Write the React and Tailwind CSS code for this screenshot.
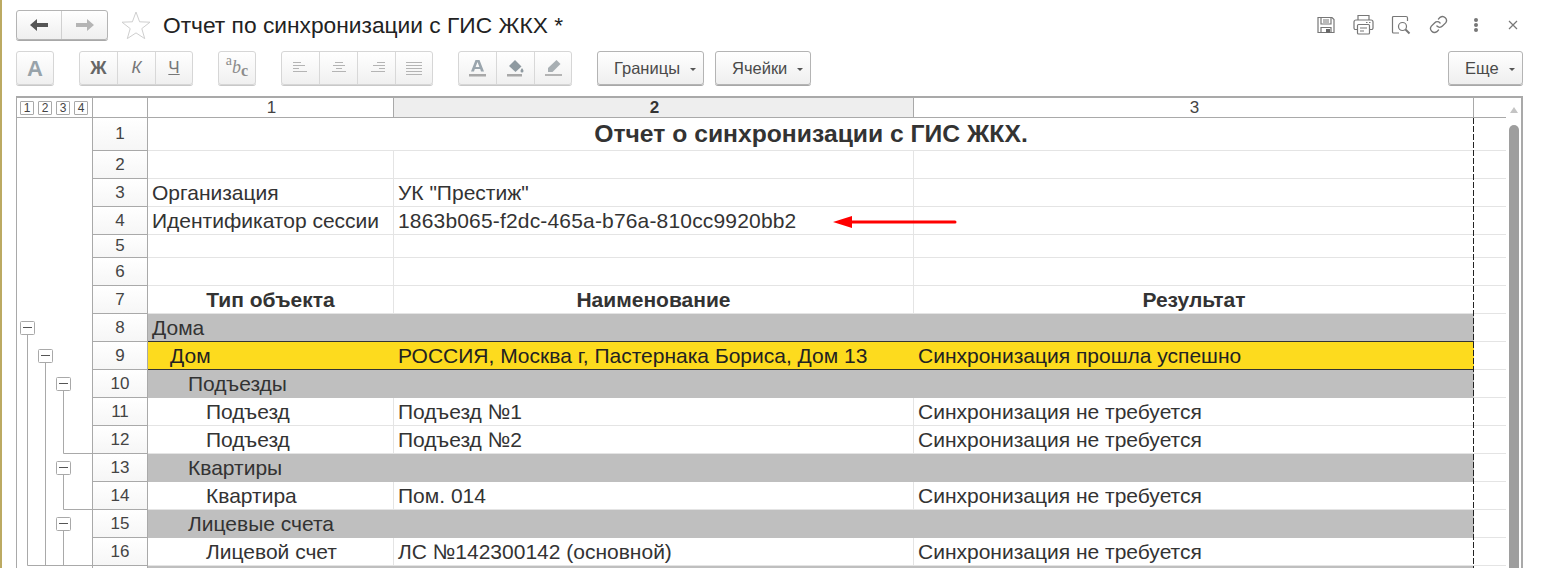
const borderLine = "border-[#a9a9a9]";

const rows = [
  { n: 1, h: "h-[33px]", title: "Отчет о синхронизации с ГИС ЖКХ." },
  { n: 2, h: "h-[28px]", c: ["", "", ""] },
  { n: 3, h: "h-[28px]", c: ["Организация", 'УК "Престиж"', ""] },
  { n: 4, h: "h-[28px]", c: ["Идентификатор сессии", <span className="tracking-[0.17px]">1863b065-f2dc-465a-b76a-810cc9920bb2</span>, ""], arrow: true },
  { n: 5, h: "h-[23px]", c: ["", "", ""] },
  { n: 6, h: "h-[28px]", c: ["", "", ""] },
  { n: 7, h: "h-[28px]", c: ["Тип объекта", "Наименование", "Результат"], head: true },
  { n: 8, h: "h-[28px]", group: "Дома", dark: true },
  { n: 9, h: "h-[28px]", c: ["Дом", "РОССИЯ, Москва г, Пастернака Бориса, Дом 13", "Синхронизация прошла успешно"], indent: "pl-[22px]", yellow: true },
  { n: 10, h: "h-[28px]", group: "Подъезды", indent: "pl-[40px]" },
  { n: 11, h: "h-[28px]", c: ["Подъезд", "Подъезд №1", "Синхронизация не требуется"], indent: "pl-[58px]" },
  { n: 12, h: "h-[28px]", c: ["Подъезд", "Подъезд №2", "Синхронизация не требуется"], indent: "pl-[58px]" },
  { n: 13, h: "h-[28px]", group: "Квартиры", indent: "pl-[40px]" },
  { n: 14, h: "h-[28px]", c: ["Квартира", "Пом. 014", "Синхронизация не требуется"], indent: "pl-[58px]" },
  { n: 15, h: "h-[28px]", group: "Лицевые счета", indent: "pl-[40px]" },
  { n: 16, h: "h-[28px]", c: ["Лицевой счет", "ЛС №142300142 (основной)", "Синхронизация не требуется"], indent: "pl-[58px]" },
  // only the top edge of this row is on screen
  { n: "", h: "h-[28px]", group: "", indent: "pl-[40px]" },
];

function Btn({ children, w = "w-[38px] last:w-[36px]" }) {
  return <div className={`${w} flex items-center justify-center border-r border-[#d8d8d8] last:border-r-0`}>{children}</div>;
}

function Group({ children }) {
  return (
    <div className="flex h-[34px] rounded-[3px] border border-[#d6d6d6] bg-linear-to-b from-white to-[#f0f0f0] shadow-[0_1px_0_#c8c8c8]">
      {children}
    </div>
  );
}

function MenuButton({ label, w }) {
  return (
    <div className={`${w} flex h-[34px] items-center gap-[10px] rounded-[3px] border border-[#b4b4b4] bg-linear-to-b from-white to-[#efefef] pl-[16px] text-[16.5px] text-[#4a4a4a] shadow-[0_1px_0_#a8a8a8]`}>
      <span>{label}</span>
      <span className="mt-[2px] h-0 w-0 border-x-[3px] border-t-[3px] border-x-transparent border-t-[#555]" />
    </div>
  );
}

function AlignIcon({ lines }) {
  return (
    <svg width="16" height="14" viewBox="0 0 16 14" stroke="#b4b4b4" strokeWidth="1">
      {lines.map((l, i) => (
        <line key={i} x1={l[0]} x2={l[1]} y1={1.5 + i * 3} y2={1.5 + i * 3} />
      ))}
    </svg>
  );
}

function TitleIcons() {
  return (
    <div className="ml-auto flex items-center pr-[23px]">
      <svg className="mr-[17px]" width="20" height="20" viewBox="0 0 20 20" fill="none" stroke="#777" strokeWidth="1.2">
        <path d="M2 2.5h14l2 2v13H2z" />
        <path d="M5 2.5v6.5h10V2.5M7 5h6M7 7h6" />
        <path d="M5 17.5v-5h10v5" />
        <rect x="10" y="14" width="4" height="3.5" fill="#666" stroke="none" />
      </svg>
      <svg className="mr-[17px]" width="21" height="21" viewBox="0 0 21 21" fill="none" stroke="#777" strokeWidth="1.2">
        <path d="M5 6V1.5h11V6" />
        <path d="M4.5 15.5H2.5a1.5 1.5 0 0 1-1.5-1.5V8a2 2 0 0 1 2-2h15a2 2 0 0 1 2 2v6a1.5 1.5 0 0 1-1.5 1.5h-2" />
        <rect x="4.5" y="10.5" width="12" height="9.5" rx="1" />
        <path d="M7 14h7M7 17h4M13 8.5h1.5M16 8.5h1.5" />
      </svg>
      <svg className="mr-[18px]" width="20" height="20" viewBox="0 0 20 20" fill="none" stroke="#777" strokeWidth="1.2">
        <path d="M15 1.5H2.5a1 1 0 0 0-1 1V17a1 1 0 0 0 1 1H8M15 1.5a1.5 1.5 0 0 1 1.5 1.5v3" />
        <circle cx="11.5" cy="11.5" r="4" />
        <path d="M14.5 14.5l4 4" strokeWidth="2" />
      </svg>
      <svg className="mr-[26px]" width="19" height="19" viewBox="0 0 24 24" fill="none" stroke="#777" strokeWidth="1.7" strokeLinecap="round">
        <path d="M10 14a5 5 0 0 0 7 0l4-4a5 5 0 0 0-7-7l-2 2" />
        <path d="M14 10a5 5 0 0 0-7 0l-4 4a5 5 0 0 0 7 7l2-2" />
      </svg>
      <div className="mr-[30px] flex flex-col gap-[1px]">
        <span className="h-[4px] w-[4px] rounded-full bg-[#777]" />
        <span className="h-[4px] w-[4px] rounded-full bg-[#777]" />
        <span className="h-[4px] w-[4px] rounded-full bg-[#777]" />
      </div>
      <svg width="10" height="10" viewBox="0 0 10 10" stroke="#777" strokeWidth="1.2">
        <path d="M1 1l8 8M9 1l-8 8" />
      </svg>
    </div>
  );
}

function Toolbar() {
  return (
    <div className="flex h-[34px] pl-[14px] pr-[18px] items-start">
      <Group>
        <Btn w="w-[36px]"><span className="text-[22px] font-bold text-[#98a3aa]">А</span></Btn>
      </Group>
      <div className="ml-[25px]">
        <Group>
          <Btn><span className="text-[18px] font-bold text-[#666]">Ж</span></Btn>
          <Btn><span className="text-[17px] italic text-[#777]">К</span></Btn>
          <Btn><span className="text-[17px] underline text-[#777]">Ч</span></Btn>
        </Group>
      </div>
      <div className="ml-[25px]">
        <Group>
          <Btn w="w-[36px]">
            <span className="flex font-['Liberation_Serif',serif] leading-none text-[#8c8c8c]">
              <span className="-mt-[4px] text-[14px]">a</span>
              <span className="text-[18px] italic">b</span>
              <span className="mt-[5px] text-[16px] font-bold">c</span>
            </span>
          </Btn>
        </Group>
      </div>
      <div className="ml-[25px]">
        <Group>
          <Btn><AlignIcon lines={[[0, 8], [0, 12], [0, 6], [0, 14]]} /></Btn>
          <Btn><AlignIcon lines={[[4, 12], [2, 14], [5, 11], [1, 15]]} /></Btn>
          <Btn><AlignIcon lines={[[8, 16], [4, 16], [10, 16], [2, 16]]} /></Btn>
          <Btn><AlignIcon lines={[[0, 16], [0, 16], [0, 16], [0, 16], [0, 16]]} /></Btn>
        </Group>
      </div>
      <div className="ml-[25px]">
        <Group>
          <Btn>
            <svg width="17" height="18" viewBox="0 0 17 18" fill="#9aa5ad">
              <path d="M6.5 1h4L15 12.5h-3l-.8-2.5H5.8L5 12.5H2zM6.6 8h3.8L8.5 3z" fillRule="evenodd" />
              <rect y="15" width="17" height="2.5" fill="#a8a8a8" />
            </svg>
          </Btn>
          <Btn>
            <svg width="17" height="18" viewBox="0 0 17 18" fill="#8f9aa1">
              <path d="M8 1l6.5 6.5L8.5 13 2 7z" />
              <path d="M15 9c1 1.5 1.5 2.2 1.5 3a1.5 1.5 0 0 1-3 0c0-.8.5-1.5 1.5-3z" />
              <rect y="15" width="15" height="2.5" fill="#a8a8a8" />
            </svg>
          </Btn>
          <Btn>
            <svg width="17" height="18" viewBox="0 0 17 18" fill="#a8afb3">
              <path d="M11.5 1l4 4-8 8H3v-4z" />
              <rect y="15" width="17" height="2" fill="#b4b4b4" />
            </svg>
          </Btn>
        </Group>
      </div>
      <div className="ml-[25px]"><MenuButton label="Границы" w="w-[107px]" /></div>
      <div className="ml-[11px]"><MenuButton label="Ячейки" w="w-[96px]" /></div>
      <div className="ml-auto"><MenuButton label="Еще" w="w-[75px]" /></div>
    </div>
  );
}

// outline tree in the gutter, coordinates are relative to the gutter body
function TreeLines() {
  const top = 118;
  const box = (x, y) => (
    <g key={`${x}-${y}`}>
      <rect x={x + 0.5} y={y - top + 0.5} width="14" height="13" fill="#fff" stroke="#a9a9a9" rx="1" />
      <line x1={x + 3} x2={x + 12} y1={y - top + 6.5} y2={y - top + 6.5} stroke="#555" />
    </g>
  );
  return (
    <svg className="absolute left-0 top-0" width="75" height="450" viewBox="0 0 75 450" fill="none" stroke="#a9a9a9">
      <path d="M10.5 216V447.5H75" />
      <path d="M28.5 244V447.5" />
      <path d="M46.5 272V335.5H75" />
      <path d="M46.5 356V391.5H75" />
      <path d="M46.5 412V447.5" />
      {box(3, 321)}
      {box(21, 349)}
      {box(39, 377)}
      {box(39, 461)}
      {box(39, 517)}
    </svg>
  );
}

function Row({ row }) {
  const numCell = (
    <div className={`w-[55px] shrink-0 flex items-center justify-center border-r border-b ${borderLine} bg-linear-to-b from-white to-[#f6f6f6] text-[17px] text-[#444]`}>
      {row.n}
    </div>
  );
  const tail = <div className="w-[32px] shrink-0 border-b border-[#e4e4e4]" />;

  if (row.title) {
    return (
      <div className={`flex ${row.h}`}>
        {numCell}
        <div className="w-[1326px] shrink-0 flex items-center justify-center border-b border-b-[#e4e4e4] text-[24.7px] font-bold text-[#333]">
          {row.title}
        </div>
        {tail}
      </div>
    );
  }
  if (row.group !== undefined) {
    return (
      <div className={`flex ${row.h}`}>
        {numCell}
        <div className={`w-[1326px] shrink-0 flex items-center bg-[#bfbfbf] text-[21px] text-[#333] ${row.indent || "pl-1"} ${row.dark ? "border-b border-b-[#333]" : ""}`}>
          {row.group}
        </div>
        {tail}
      </div>
    );
  }

  const bg = row.yellow ? "bg-[#fddb1e]" : "";
  const color = row.yellow ? "text-[#222]" : "text-[#333]";
  const bottom = row.yellow ? "border-b border-b-[#333]" : "border-b border-b-[#e4e4e4]";
  const vline = row.yellow ? "" : "border-r border-r-[#e4e4e4]";
  const align = row.head ? "justify-center font-bold" : "pl-1";
  return (
    <div className={`flex ${row.h}`}>
      {numCell}
      <div className={`w-[246px] shrink-0 flex items-center ${bg} ${bottom} ${vline} ${row.head ? align : row.indent || "pl-1"} text-[21px] ${color}`}>
        {row.c[0]}
      </div>
      <div className={`relative w-[520px] shrink-0 flex items-center ${bg} ${bottom} ${vline} ${align} text-[21px] ${color}`}>
        {row.c[1]}
        {row.arrow && (
          <svg className="absolute left-[439px] top-[8px]" width="125" height="14" viewBox="0 0 125 14" fill="#f00">
            <path d="M0 7L19 1V5.5H122a1.5 1.5 0 0 1 0 3H19V13z" />
          </svg>
        )}
      </div>
      <div className={`w-[560px] shrink-0 flex items-center ${bg} ${bottom} ${align} text-[21px] ${color}`}>
        {row.c[2]}
      </div>
      {tail}
    </div>
  );
}

function Sheet() {
  return (
    <div className={`ml-[14px] mt-[11px] flex w-[1507px] border-t-2 border-l border-r-2 ${borderLine}`}>
      <div className={`w-[76px] shrink-0 border-r ${borderLine}`}>
        <div className={`flex h-[20px] items-center gap-[4px] pl-[3px] border-b ${borderLine}`}>
          {[1, 2, 3, 4].map((n) => (
            <span key={n} className="flex h-[14px] w-[14px] items-center justify-center rounded-[1px] border border-[#a9a9a9] text-[12px] text-[#444]">
              {n}
            </span>
          ))}
        </div>
        <div className="relative h-[500px]">
          <TreeLines />
        </div>
      </div>

      <div className="relative w-[1413px] shrink-0">
        <div className="flex h-[20px] text-[17px] text-[#444]">
          <div className={`w-[55px] shrink-0 border-r border-b ${borderLine}`} />
          <div className={`w-[246px] shrink-0 flex items-center justify-center pl-[2px] border-r border-b ${borderLine}`}>1</div>
          <div className={`w-[520px] shrink-0 flex items-center justify-center pl-[2px] border-r border-b ${borderLine} bg-[#eeeeee] font-bold text-[#333]`}>2</div>
          <div className={`w-[560px] shrink-0 flex items-center justify-center pl-[2px] border-r border-b ${borderLine}`}>3</div>
          <div className={`w-[32px] shrink-0 border-b ${borderLine}`} />
        </div>
        {rows.map((r, i) => (
          <Row key={i} row={r} />
        ))}
        {/* page break marker lies over the rows */}
        <div className="absolute left-[1380px] top-[20px] bottom-0 w-px bg-[repeating-linear-gradient(to_bottom,#222_0,#222_6px,transparent_6px,transparent_8px)]" />
      </div>

      <div className="w-[16px] shrink-0 flex flex-col items-center">
        <span className="mt-[9px] h-0 w-0 border-x-[4px] border-b-[6px] border-x-transparent border-b-[#c4c4c4]" />
        <div className="mt-[12px] w-[10px] flex-1 rounded-t-[5px] bg-[#9e9e9e]" />
      </div>
    </div>
  );
}

export default function App() {
  return (
    <div className="h-[568px] w-[1541px] overflow-hidden border-l-2 border-[#bcaa62] bg-white font-['Liberation_Sans',Arial,sans-serif]">
      <div className="flex h-[51px] items-start pt-[10px] pl-[14px]">
        <div className="flex h-[30px] w-[92px] rounded-[3px] border border-[#b4b4b4] bg-linear-to-b from-white to-[#efefef] shadow-[0_1px_0_#a8a8a8]">
          <div className="flex w-[45px] items-center justify-center border-r border-[#d0d0d0]">
            <svg width="18" height="12" viewBox="0 0 18 12" fill="#555">
              <path d="M0 6l7-6v4h11v4H7v4z" />
            </svg>
          </div>
          <div className="flex flex-1 items-center justify-center">
            <svg width="18" height="12" viewBox="0 0 18 12" fill="#b5b5b5">
              <path d="M18 6l-7-6v4H0v4h11v4z" />
            </svg>
          </div>
        </div>
        <svg className="ml-[13px] mt-[1px]" width="30" height="29" viewBox="0 0 30 29" fill="#fff" stroke="#cfcfcf" strokeWidth="1">
          <path d="M15 1l3.6 9.8 10.4.4-8.2 6.4 2.9 10L15 21.9l-8.7 5.7 2.9-10L1 11.2l10.4-.4z" />
        </svg>
        <div className="ml-[12px] text-[22.75px] leading-[30px] text-[#222]">Отчет по синхронизации с ГИС ЖКХ *</div>
        <div className="ml-auto mt-[4px] flex">
          <TitleIcons />
        </div>
      </div>
      <Toolbar />
      <Sheet />
    </div>
  );
}
